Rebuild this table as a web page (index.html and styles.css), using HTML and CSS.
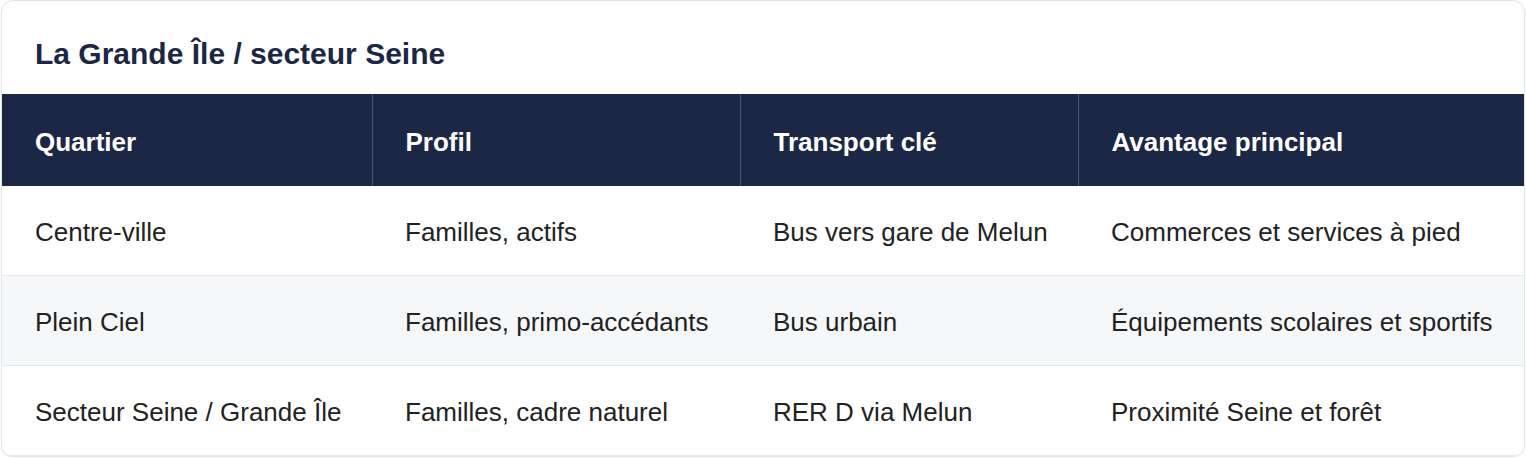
FILE: index.html
```html
<!DOCTYPE html>
<html lang="fr">
<head>
<meta charset="utf-8">
<title>La Grande Île / secteur Seine</title>
<link rel="stylesheet" href="styles.css">
</head>
<body>
<section class="card">
  <h2 class="card-title">La Grande Île / secteur Seine</h2>
  <table class="data">
    <colgroup>
      <col class="c1"><col class="c2"><col class="c3"><col class="c4">
    </colgroup>
    <thead>
      <tr>
        <th>Quartier</th>
        <th>Profil</th>
        <th>Transport clé</th>
        <th>Avantage principal</th>
      </tr>
    </thead>
    <tbody>
      <tr>
        <td>Centre-ville</td>
        <td>Familles, actifs</td>
        <td>Bus vers gare de Melun</td>
        <td>Commerces et services à pied</td>
      </tr>
      <tr>
        <td>Plein Ciel</td>
        <td>Familles, primo-accédants</td>
        <td>Bus urbain</td>
        <td>Équipements scolaires et sportifs</td>
      </tr>
      <tr>
        <td>Secteur Seine / Grande Île</td>
        <td>Familles, cadre naturel</td>
        <td>RER D via Melun</td>
        <td>Proximité Seine et forêt</td>
      </tr>
    </tbody>
  </table>
</section>
</body>
</html>
```
FILE: styles.css
```css
html, body {
  margin: 0;
  padding: 0;
  background: #ffffff;
}
body {
  font-family: "Liberation Sans", Arial, Helvetica, sans-serif;
  color: #222222;
}
.card {
  margin: 0 1px;
  border: 1px solid #e2e5ea;
  border-radius: 12px;
  overflow: hidden;
  background: #ffffff;
  box-shadow: 0 1px 2px rgba(15, 23, 42, 0.06);
}
.card-title {
  margin: 0;
  padding: 35px 33px 22px;
  font-size: 30px;
  line-height: 36px;
  font-weight: 700;
  color: #1b2745;
}
.data {
  width: 100%;
  border-collapse: collapse;
  table-layout: fixed;
  font-size: 26px;
  line-height: 30px;
}
.c1 { width: 370px; }
.c2 { width: 368px; }
.c3 { width: 338px; }
.c4 { width: auto; }
.data th {
  background: #1b2745;
  color: #ffffff;
  font-weight: 700;
  text-align: left;
  padding: 33px 33px 29px;
  border-left: 1px solid rgba(255, 255, 255, 0.22);
}
.data th:first-child {
  border-left: none;
}
.data td {
  padding: 31px 33px 28px;
  border-bottom: 1px solid #e6e8ec;
  white-space: nowrap;
}
.data tbody tr:nth-child(even) td {
  background: #f6f7f9;
}
```
